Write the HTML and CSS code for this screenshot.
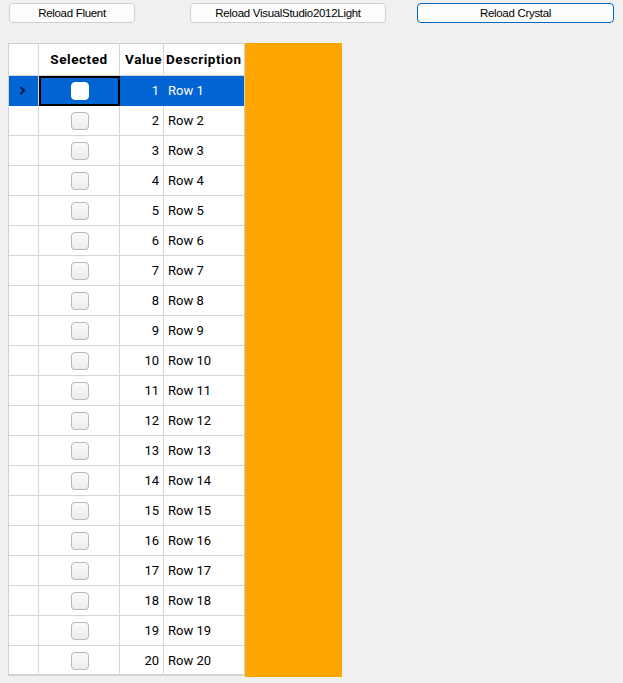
FILE: index.html
```html
<!DOCTYPE html>
<html lang="en">
<head>
  <meta charset="UTF-8" />
  <title>Grid Theme Demo</title>
  <link rel="stylesheet" href="styles.css">
</head>
<body>
  <div class="toolbar">
    <button class="btn btn-fluent">Reload Fluent</button>
    <button class="btn btn-vs">Reload VisualStudio2012Light</button>
    <button class="btn btn-crystal focused">Reload Crystal</button>
  </div>

  <div class="main">
    <div class="grid" id="grid">
      <div class="row head">
        <div class="cell rh"></div>
        <div class="cell sel">Selected</div>
        <div class="cell val">Value</div>
        <div class="cell desc">Description</div>
      </div>
    </div>
    <div class="panel"></div>
  </div>

  <script>
    const grid = document.getElementById("grid");
    const arrow = `<svg width="7" height="9" viewBox="0 0 7 9"><path d="M1.5 1 L5 4.5 L1.5 8" fill="none" stroke="#12183f" stroke-width="1.9"/></svg>`;
    for (let i = 1; i <= 20; i++) {
      const row = document.createElement("div");
      row.className = "row" + (i === 1 ? " current" : "");
      row.innerHTML =
        `<div class="cell rh">${i === 1 ? arrow : ""}</div>` +
        `<div class="cell sel"><span class="check"></span></div>` +
        `<div class="cell val">${i}</div>` +
        `<div class="cell desc">Row ${i}</div>`;
      grid.appendChild(row);
    }
  </script>
</body>
</html>
```

FILE: styles.css
```css
* { box-sizing: border-box; margin: 0; padding: 0; }

body {
  background: #f0f0f0;
  font-family: Roboto, "Liberation Sans", sans-serif;
  color: #000;
}

.toolbar {
  display: flex;
  padding: 3px 0 0 9px;
  height: 43px;
}

.btn {
  height: 20px;
  background: #fdfdfd;
  border: 1px solid #d0d0d0;
  border-radius: 4px;
  font-family: "Liberation Sans", sans-serif;
  font-size: 11.5px;
  letter-spacing: -0.3px;
  color: #000;
}

.btn-fluent { width: 126px; }
.btn-vs { width: 196px; margin-left: 55px; }
.btn-crystal { width: 197px; margin-left: 31px; }
.focused { border-color: #0067c0; }

.main {
  display: flex;
  padding-left: 8px;
}

.grid {
  width: 237px;
  height: 633px;
  background: #fff;
  border: 1px solid #d2d2d2;
  border-bottom-width: 2px;
}

.row {
  display: grid;
  grid-template-columns: 30px 81px 44px 80px;
  height: 30px;
}

.row.head { height: 32px; }

.cell {
  border-right: 1px solid #d6d6d6;
  border-bottom: 1px solid #d6d6d6;
  display: flex;
  align-items: center;
  font-size: 13px;
  white-space: nowrap;
  overflow: hidden;
}

.cell.desc { border-right: none; padding-left: 4px; }
.cell.val { justify-content: flex-end; padding-right: 4px; }
.cell.sel { justify-content: center; }

.head .cell {
  font-weight: 700;
  font-size: 13.5px;
  letter-spacing: 0.55px;
  padding-bottom: 2px;
}

.head .val { padding-right: 1px; }
.head .desc { padding-left: 2px; }

.check {
  width: 18px;
  height: 18px;
  border: 1px solid #b8b8b8;
  border-radius: 4px;
  background: linear-gradient(#fafafa, #ececec);
  margin-left: 1px;
}

.current .cell {
  background: #0064d2;
  color: #fff;
  border-bottom-color: #0064d2;
  border-right-color: #0064d2;
}

.current .rh {
  justify-content: center;
  padding-right: 3px;
  border-right-color: #d6d6d6;
}

.current .sel {
  border: 2px solid #000;
}

.current .check {
  border-color: #fff;
  background: #fff;
}

.panel {
  width: 97px;
  height: 634px;
  background: #ffa500;
}
```
